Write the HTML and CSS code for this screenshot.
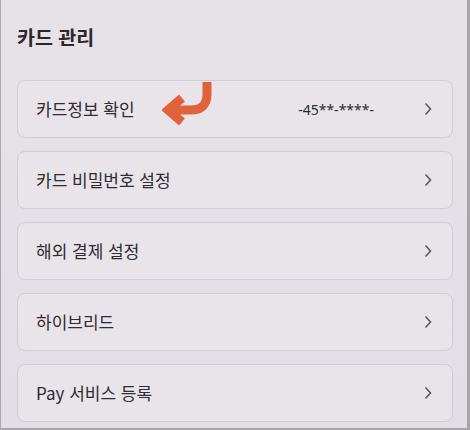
FILE: index.html
```html
<!DOCTYPE html>
<html lang="ko">
<head>
<meta charset="utf-8">
<link rel="stylesheet" href="styles.css">
</head>
<body>
<div class="page">
  <h1 class="title">카드 관리</h1>
  <ul class="menu">
    <li class="card">
      <span class="label">카드정보 확인</span>
      <svg class="pointer" width="52" height="46" viewBox="0 0 52 46">
        <path d="M45 0 V12 Q45 28 29 28 H10" fill="none" stroke="#e0623a" stroke-width="9"/>
        <path d="M20 16 L6 28 L20 40" fill="none" stroke="#e0623a" stroke-width="9" stroke-linejoin="miter"/>
      </svg>
      <span class="value">-45**-****-</span>
      <svg class="chev" width="8" height="14" viewBox="0 0 8 14"><path d="M1.5 1.5 L6.5 7 L1.5 12.5" fill="none" stroke="#555" stroke-width="1.5"/></svg>
    </li>
    <li class="card">
      <span class="label">카드 비밀번호 설정</span>
      <svg class="chev" width="8" height="14" viewBox="0 0 8 14"><path d="M1.5 1.5 L6.5 7 L1.5 12.5" fill="none" stroke="#555" stroke-width="1.5"/></svg>
    </li>
    <li class="card">
      <span class="label">해외 결제 설정</span>
      <svg class="chev" width="8" height="14" viewBox="0 0 8 14"><path d="M1.5 1.5 L6.5 7 L1.5 12.5" fill="none" stroke="#555" stroke-width="1.5"/></svg>
    </li>
    <li class="card">
      <span class="label">하이브리드</span>
      <svg class="chev" width="8" height="14" viewBox="0 0 8 14"><path d="M1.5 1.5 L6.5 7 L1.5 12.5" fill="none" stroke="#555" stroke-width="1.5"/></svg>
    </li>
    <li class="card">
      <span class="label">Pay 서비스 등록</span>
      <svg class="chev" width="8" height="14" viewBox="0 0 8 14"><path d="M1.5 1.5 L6.5 7 L1.5 12.5" fill="none" stroke="#555" stroke-width="1.5"/></svg>
    </li>
  </ul>
</div>
</body>
</html>
```
FILE: styles.css
```css
html, body {
  margin: 0;
  padding: 0;
}
body {
  width: 470px;
  height: 430px;
  overflow: hidden;
  background: #e4dfe6;
  font-family: "Noto Sans CJK KR", "Noto Sans", sans-serif;
  color: #2e2c30;
}
.page {
  box-sizing: border-box;
  width: 470px;
  height: 430px;
  border-left: 1px solid #aca8ae;
  border-right: 3px solid #a8a4aa;
  border-bottom: 2px solid #a8a4aa;
  padding: 0 14px 0 16px;
  background: linear-gradient(180deg, #e6e2e8 0%, #e3dee5 100%);
}
.title {
  margin: 0;
  padding-top: 25px;
  height: 80px;
  box-sizing: border-box;
  font-size: 19.5px;
  line-height: 24px;
  font-weight: 700;
  color: #2a282c;
}
.menu {
  list-style: none;
  margin: 0;
  padding: 0;
  display: flex;
  flex-direction: column;
  gap: 13px;
}
.card {
  position: relative;
  box-sizing: border-box;
  height: 58px;
  display: flex;
  align-items: center;
  padding: 0 20px 0 18px;
  border: 1px solid #d2cdd4;
  border-radius: 8px;
  background: #e8e4ea;
}
.label {
  font-size: 17px;
  line-height: 22px;
  color: #2e2c30;
}
.value {
  margin-left: auto;
  margin-right: 50px;
  font-family: "Noto Sans", sans-serif;
  font-size: 14px;
  color: #2e2c30;
}
.chev {
  margin-left: auto;
  flex: none;
}
.value + .chev {
  margin-left: 0;
}
.pointer {
  position: absolute;
  left: 144px;
  top: 1px;
}
```
